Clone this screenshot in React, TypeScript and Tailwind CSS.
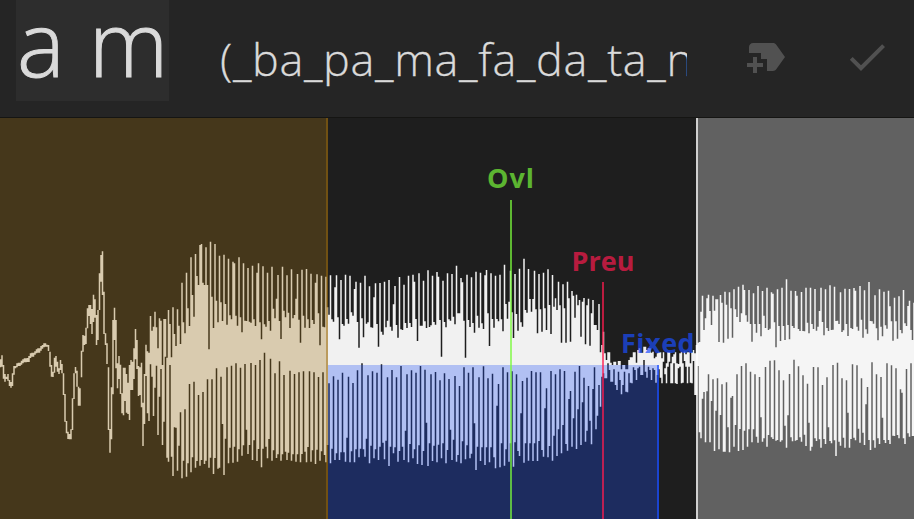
import { MdCheck, MdNewLabel } from "react-icons/md";

type Block = { x: number; y: number; top: string; bottom: string };

// Sample peaks as "position,value" pairs in thirds of a pixel, relative to each block's origin.
const BLOCKS: Block[] = [
  {
    x: 0,
    y: 230,
    top: "0,388 5,376 9,405 14,432 18,440 22,432 27,450 31,456 36,430 40,408 45,408 50,400 56,398 62,392 68,388 74,385 80,384 86,378 91,370 97,368 103,364 109,358 115,355 121,348 127,345 132,340 137,340 141,344 145,345 149,365 153,405 158,425 162,383 167,378 172,395 176,415 180,390 185,402 190,430 194,492 198,573 202,605 207,612 212,598 216,505 221,430 226,411 230,422 234,470 239,475 243,362 248,315 253,317 257,293 262,235 266,225 271,225 275,237 280,194 284,208 289,255 293,240 298,130 303,75 307,64 311,185 316,310 320,340 325,412 330,597 334,472 338,270 343,233 347,270 352,400 356,378 361,404 366,490 370,413 375,413 379,432 384,458 388,405 393,390 397,395 402,355 407,297 411,330 416,408 420,412 425,398 429,518 433,432 438,344 443,364 447,368 452,258 456,302 460,290 465,245 469,292 474,355 478,265 483,272 487,405 491,267 496,267 500,383",
    bottom: "0,412 5,410 9,446 14,455 18,447 22,452 27,468 31,473 36,468 40,434 45,415 50,412 56,408 62,404 68,400 74,397 80,396 86,396 91,384 97,380 103,374 109,370 115,368 121,362 127,356 132,352 137,350 141,350 145,363 149,410 153,440 158,441 162,428 167,410 172,425 176,432 180,420 185,430 190,495 194,575 198,610 202,627 207,628 212,628 216,600 221,507 226,430 230,470 234,527 239,527 243,442 248,365 253,345 257,342 262,295 266,258 271,282 275,312 280,276 284,263 289,345 293,330 298,240 303,155 307,195 311,312 316,345 320,402 325,600 330,668 334,628 338,493 343,330 347,415 352,475 356,447 361,492 366,550 370,556 375,513 379,548 384,552 388,570 393,480 397,480 402,447 407,388 411,417 416,498 420,495 425,532 429,648 433,582 438,438 443,550 447,573 452,403 456,440 460,558 465,473 469,407 474,615 478,500 483,417 487,645 491,575 496,380 500,683",
  },
  {
    x: 140,
    y: 230,
    top: "85,240 90,282 94,382 99,232 103,312 108,348 112,238 117,287 121,342 126,158 130,277 135,310 139,128 144,235 148,288 153,82 157,195 162,260 166,72 171,138 175,165 180,45 184,42 189,158 193,165 198,52 202,165 207,358 211,35 216,200 220,294 225,42 229,212 234,277 238,77 243,217 248,273 252,74 256,222 261,284 265,86 270,256 274,268 279,95 283,100 288,257 292,287 297,82 301,262 306,307 310,100 315,272 319,273 324,114 328,275 333,278 337,107 342,268 346,288 351,128 355,100 360,277 364,328 369,109 373,283 378,290 382,128 387,273 391,302 396,110 400,236 405,265 409,206 414,135 418,273 423,327 427,110 432,242 436,262 441,136 445,248 450,294 454,118 459,265 463,255 468,206 472,132 477,269 481,338 486,119 490,257 495,293 499,117 504,268 508,294 513,131 517,270 522,282 526,158 531,133 535,250 540,346 544,137 549,290 553,292 558,140 562,232",
    bottom: "85,695 90,405 94,680 99,738 103,592 108,593 112,722 117,647 121,547 126,745 130,692 135,538 139,740 144,700 148,462 153,727 157,682 162,455 166,713 171,693 175,495 180,707 184,690 189,486 193,702 198,692 202,448 207,713 211,683 216,448 220,732 225,684 229,415 234,716 238,713 243,440 247,582 252,735 256,626 261,412 265,700 270,653 274,407 279,698 283,650 288,400 292,695 297,658 301,413 306,677 310,646 315,402 319,599 324,672 328,645 333,399 337,690 342,631 346,405 351,693 355,657 360,390 364,712 369,656 373,368 378,650 382,685 387,627 391,386 396,692 400,661 405,430 409,684 414,673 418,394 423,692 427,673 432,435 436,665 441,690 445,668 450,422 454,692 459,673 463,432 468,695 472,673 477,427 481,697 486,672 490,424 495,665 499,697 504,651 508,424 513,695 517,661 522,427 526,702 531,659 535,441 540,692 544,664 549,427 553,675 558,697 562,645",
  },
  {
    x: 320,
    y: 250,
    top: "27,194 31,76 36,208 40,215 45,112 49,76 54,202 58,268 63,90 67,222 72,227 76,74 81,207 85,221 90,77 94,187 99,197 103,117 108,95 112,216 117,293 121,98 126,205 130,262 135,77 139,221 144,217 148,109 153,232 157,233 162,142 166,100 171,222 175,290 180,99 184,245 189,254 193,95 198,232 202,212 207,90 211,230 216,242 220,163 225,108 229,225 234,263 238,81 243,238 247,240 252,104 256,219 261,234 265,77 270,219 274,231 279,74 283,95 288,207 292,273 297,70 301,227 306,227 310,92 315,214 319,234 324,61 328,231 333,226 337,77 342,216 346,224 351,66 355,80 360,210 364,320 369,92 373,216 378,232 382,70 387,208 391,212 396,72 400,200 405,223 409,47 414,190 418,190 423,84 427,97 432,212 436,323 441,74 445,210 450,231 454,82 459,219 463,248 468,65 472,197 477,233 481,68 486,220 490,237 495,76 499,60 504,190 508,288 513,70 517,207 522,233 526,77 531,207 535,214 540,74 544,208 549,244 553,44 558,162 562,206 567,155 571,62 576,187 580,264 585,72 589,192 594,242 598,56",
    bottom: "27,400 31,640 36,596 40,379 45,630 49,610 54,389 58,630 63,607 67,368 72,607 76,635 81,563 85,380 90,637 94,604 99,399 103,637 108,598 112,361 117,622 121,596 126,340 130,598 135,620 139,566 144,376 148,640 153,587 157,364 162,625 166,598 171,368 175,630 180,590 184,343 189,578 193,628 198,572 202,382 207,648 211,590 216,360 220,610 225,592 229,382 234,635 238,603 243,348 247,590 252,630 256,542 261,373 265,637 270,582 274,361 279,625 283,598 288,368 292,642 297,586 301,348 306,645 310,603 315,359 319,518 324,648 328,580 333,373 337,633 342,587 346,366 351,637 355,584 360,391 364,625 369,580 373,370 378,640 382,600 387,387 391,539 396,630 400,569 405,378 409,635 414,615 418,408 423,640 427,574 432,352 436,628 441,586 445,368 450,625 454,611 459,352 463,520 468,660 472,590 477,382 481,633 486,592 490,349 495,645 499,592 504,385 508,637 513,592 517,371 522,622 526,655 531,467 535,402 540,652 544,580 549,352 553,647 558,598 562,367 567,635 571,580 576,364 580,650 585,577 589,373 594,603 598,620",
  },
  {
    x: 480,
    y: 160,
    top: "118,326 122,487 127,500 132,296 136,450 141,458 145,327 150,417 154,455 159,417 163,332 168,448 172,520 177,342 181,448 186,515 190,338 195,445 199,510 204,328 208,435 213,522 217,345 222,440 226,415 231,450 235,365 240,436 244,548 249,373 253,445 258,548 262,365 267,415 271,545 276,393 280,407 285,473 289,404 294,436 298,420 303,530 307,425 312,414 316,553 321,436 325,416 330,557 334,460 339,420 343,495 348,495 352,510 357,432 361,577 366,555 370,515 375,580 379,600 384,577 388,577 393,608 397,615 402,605 406,605 411,615 415,603 420,603 424,628 429,615 433,615 438,628 442,628 447,600 451,592 456,592 460,577 465,577 469,608 473,570 478,565 483,578 487,578 492,560 496,560 501,570 505,565 510,565 514,578 519,575 523,595 528,590 532,580 537,577 541,577 546,595 550,577 555,625 559,610 564,577 568,577 573,610 577,590 582,583 586,577 591,610 595,612 600,580 604,577 609,610 613,575 618,583 622,577 627,577 631,610 636,577 640,570 645,580 649,555",
    bottom: "118,888 122,760 127,663 132,908 136,850 141,653 145,902 150,850 154,633 159,903 163,850 168,637 172,903 177,843 181,637 186,870 190,890 195,745 199,685 204,892 208,858 213,633 217,902 222,827 226,643 231,888 235,808 240,628 244,880 249,795 253,633 258,852 262,872 267,717 271,693 276,860 280,775 285,635 289,867 294,748 298,618 303,855 307,727 312,653 316,845 321,812 325,678 330,782 334,853 339,687 343,622 348,808 352,767 357,675 361,740 366,650 370,640 375,655 379,655 384,610 388,630 393,665 397,665 402,628 406,675 411,690 415,635 420,660 424,703 429,675 433,635 438,695 442,697 447,640 451,668 456,670 460,622 465,630 469,660 473,625 478,620 483,645 487,645 492,600 496,635 501,653 505,620 510,630 514,660 519,625 523,630 528,668 532,645 537,628 541,653 546,670 550,605 555,643 559,670 564,620 568,605 573,670 577,670 582,610 586,670 591,672 595,625 600,620 604,670 609,668 613,603 618,620 622,670 627,620 631,668 636,670 640,603 645,705 649,705",
  },
  {
    x: 680,
    y: 260,
    top: "54,248 58,246 63,155 67,107 72,210 76,175 81,115 86,104 90,153 95,195 99,107 103,152 108,118 113,118 117,246 121,105 126,128 130,248 135,95 139,134 144,236 148,97 153,145 157,233 162,88 166,148 171,171 175,80 180,186 184,160 189,74 193,90 198,166 202,185 207,90 211,192 216,245 220,100 225,192 229,218 234,78 238,192 243,229 247,93 252,167 256,204 261,83 265,210 270,206 275,97 279,101 283,187 288,262 292,88 297,198 301,243 306,83 310,198 315,240 319,58 324,195 328,238 333,92 337,198 342,204 346,93 351,107 355,207 360,213 364,96 369,213 373,214 378,83 382,188 387,220 391,83 396,192 400,207 405,87 409,212 414,200 418,153 423,83 427,186 432,226 436,88 441,204 445,213 450,76 454,210 459,209 463,80 468,183 472,182 477,192 481,97 486,216 490,211 495,86 499,192 504,228 508,87 513,204 517,207 522,84 526,92 531,200 535,212 540,78 544,179 549,233 553,91 558,208 562,221 567,66 571,183 576,184 580,191 585,106 589,205 594,241 598,88 603,200 607,229 612,95 616,196 621,206 625,92 630,139 634,184 639,242 643,113 648,184 652,236 657,109 661,210 666,220 670,90 675,190 679,198 684,138 688,122 693,210 697,240 701,128",
    bottom: "54,318 58,517 63,535 67,416 72,396 76,547 81,394 85,343 90,547 95,423 99,358 103,573 108,452 112,355 117,568 121,465 126,373 130,575 135,575 139,367 144,502 148,577 153,413 157,408 162,560 166,495 171,343 175,573 180,507 184,318 189,570 193,512 198,310 202,560 207,508 211,335 216,547 220,508 225,343 229,530 234,548 238,351 243,472 247,545 252,535 256,321 261,560 265,525 270,302 274,532 279,537 283,301 288,542 292,540 297,331 301,545 306,541 310,361 315,497 319,563 324,466 328,342 333,532 337,544 342,299 346,542 351,540 355,319 360,532 364,545 369,346 373,524 378,558 382,371 387,488 391,572 396,560 400,321 405,535 409,543 414,322 418,538 423,563 427,375 432,537 436,552 441,352 445,502 450,543 454,550 459,315 463,541 468,588 472,308 477,545 481,557 486,355 490,533 495,563 499,361 504,458 508,563 513,537 517,313 522,533 526,541 531,316 535,506 540,548 544,355 549,518 553,555 558,433 562,381 567,540 571,570 576,307 580,541 585,563 589,343 594,535 598,552 603,351 607,473 612,540 616,549 621,310 625,540 630,552 634,316 639,527 643,528 648,325 652,525 657,535 661,388 666,398 670,535 675,552 679,327 684,520 688,530 693,310 697,528 701,528",
  },
];

const COLUMNS = 611;

function readEdge(edge: "top" | "bottom"): number[] {
  const values: (number | undefined)[] = new Array(COLUMNS).fill(undefined);
  for (const block of BLOCKS) {
    for (const pair of block[edge].split(" ")) {
      const [px, py] = pair.split(",").map(Number);
      const column = Math.round((block.x * 3 + px - 1) / 4.5);
      if (column < COLUMNS) values[column] = block.y + py / 3;
    }
  }
  let last = values.find((v) => v !== undefined) ?? 365;
  return values.map((v) => (last = v ?? last));
}

function wavePath(): string {
  const top = readEdge("top");
  const bottom = readEdge("bottom");
  let d = "";
  top.forEach((y, c) => {
    const x = c * 1.5 - 0.25;
    d += `${c === 0 ? "M" : "L"}${x} ${y.toFixed(1)}H${x + 1.5}`;
  });
  for (let c = COLUMNS - 1; c >= 0; c--) {
    const x = c * 1.5 - 0.25;
    d += `L${x + 1.5} ${bottom[c].toFixed(1)}H${x}`;
  }
  return d + "Z";
}

const WAVE = wavePath();

function Header() {
  return (
    <header className="flex h-[118px] items-start border-b border-[#151513] bg-[#252525] pl-4 font-light text-[#dadada]">
      <div className="flex h-[101px] w-[153px] shrink-0 items-end bg-[#2d2d2d] pb-[9px] pl-px">
        <span className="whitespace-pre text-[90px] leading-[100px] tracking-[0.3px] [-webkit-text-stroke:1px_#dadada]">a m</span>
      </div>
      <div className="ml-[51px] mr-[56px] flex h-[118px] w-[467px] shrink-0 items-center overflow-hidden">
        <span className="whitespace-nowrap text-[45px] leading-[118px] tracking-[0.66px] [-webkit-text-stroke:0.3px_#dadada]">(_ba_pa_ma_fa_da_ta_n</span>
      </div>
      <div className="flex gap-[52px] pt-[33px] text-[#515151]">
        <MdNewLabel size={48} />
        <MdCheck size={48} />
      </div>
    </header>
  );
}

function Regions() {
  return (
    <div className="absolute inset-0 flex">
      <div className="w-[328px] border-r-2 border-[rgba(158,107,12,0.5)] bg-[rgba(163,115,23,0.3)]" />
      <div className="flex w-[368px] items-end">
        <div className="h-[154px] w-[331px] border-r-2 border-[rgba(27,78,255,0.7)] bg-[rgba(30,80,250,0.3)]" />
      </div>
      <div className="flex-1 border-l-2 border-white/70 bg-white/30" />
    </div>
  );
}

function Markers() {
  return (
    <>
      <div className="absolute bottom-0 left-[487px] flex h-[357px] w-[48px] flex-col items-center text-[rgba(121,250,58,0.7)]">
        <span className="h-[38px] tracking-[0.9px]">Ovl</span>
        <div className="w-[2px] flex-1 bg-current" />
      </div>
      <div className="absolute bottom-0 left-[571px] flex h-[274px] w-[64px] flex-col items-center text-[rgba(255,27,78,0.7)]">
        <span className="h-[37px]">Preu</span>
        <div className="w-[2px] flex-1 bg-current" />
      </div>
      <span className="absolute left-[621px] top-[209px] tracking-[0.5px] text-[rgba(27,78,255,0.7)]">Fixed</span>
    </>
  );
}

export default function App() {
  return (
    <div className="flex h-[519px] w-[914px] flex-col overflow-hidden bg-[#1e1e1e] font-['Open_Sans',sans-serif]">
      <Header />
      <main className="relative flex-1 overflow-hidden text-[27px] font-bold leading-[32px]">
        <svg className="block" width="914" height="401" viewBox="0 118 914 401">
          <path d={WAVE} fill="#f1f1f1" />
        </svg>
        <Regions />
        <Markers />
      </main>
    </div>
  );
}
